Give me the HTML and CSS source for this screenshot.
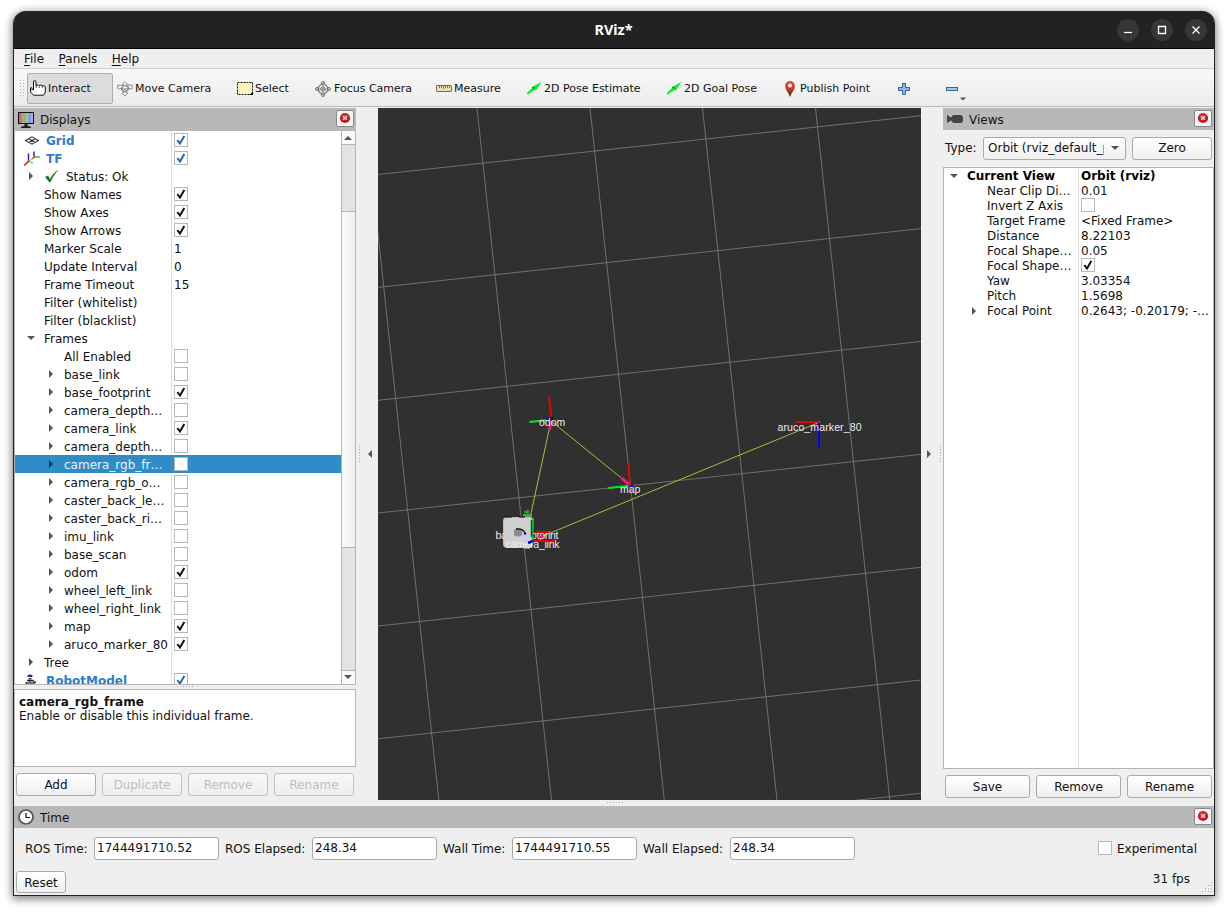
FILE: index.html
```html
<!DOCTYPE html>
<html lang="en">
<head>
<meta charset="utf-8">
<title>RViz*</title>
<link rel="stylesheet" href="styles.css">
</head>
<body>
<svg class="defs" width="0" height="0">
  <symbol id="check" viewBox="0 0 14 14"><path d="M3.3 7.2 L6 10.400 L10.300 3" fill="none" stroke="currentColor" stroke-width="2"/></symbol>
  <symbol id="right" viewBox="0 0 10 10"><path d="M3 1 L7 5 L3 9Z" fill="currentColor"/></symbol>
  <symbol id="down" viewBox="0 0 10 10"><path d="M1 3 H9 L5 7Z" fill="currentColor"/></symbol>
  <symbol id="close" viewBox="0 0 18 17"><circle cx="9" cy="8" r="5.1" fill="#c4161c"/><circle cx="9" cy="6.5" r="3.6" fill="#d94a4e" opacity=".6"/><path d="M7.200 6.200 L10.800 9.800 M10.800 6.200 L7.200 9.800" stroke="#f6dede" stroke-width="1.400"/></symbol>
  <symbol id="pose" viewBox="0 0 16 16"><path d="M.5 12.5 L6 7 L5.5 6.5 L15.5 .8 L10 9.500 L8.500 9 L2 13.500Z" fill="#00f52b"/><path d="M6 6.500 L9 8 L8 5.500Z" fill="#087a1a"/></symbol>
</svg>
<main class="window">
  <header class="titlebar">
    <h1>RViz*</h1>
    <div class="controls">
      <svg viewBox="0 0 22 22"><circle cx="11" cy="11" r="11"/><path d="M7 13.500 H15"/></svg>
      <svg viewBox="0 0 22 22"><circle cx="11" cy="11" r="11"/><path d="M7.500 7.500 H14.500 V14.500 H7.500Z"/></svg>
      <svg viewBox="0 0 22 22"><circle cx="11" cy="11" r="11"/><path d="M7.500 7.500 L14.500 14.500 M14.500 7.500 L7.500 14.500"/></svg>
    </div>
  </header>
  <nav class="menubar"><span><u>F</u>ile</span><span><u>P</u>anels</span><span><u>H</u>elp</span></nav>
  <div class="toolbar">
    <span class="grip"></span>
    <div class="tool active w-interact"><svg viewBox="0 0 16 16"><path d="M3.500 10 V2 Q3.500 .5 4.700 .5 T6 2 V5.500 L8.500 4.800 L9.200 5.500 L11.500 5 L12.200 6 L14.300 5.800 L15.300 7 V12.500 L13.500 15.200 H3.500 L.5 12 V8 Q1.500 7 2 8 V10.500" fill="#fff" stroke="#111"/><path d="M6.200 5V8 M9.200 5.500V8 M12.200 6V8" stroke="#333" stroke-width=".8"/></svg><span>Interact</span></div>
    <div class="tool w-move"><svg viewBox="0 0 16 16"><g fill="none" stroke="#777" stroke-width=".9"><path d="M8 .5 L11 3.500 H9.500 V5 L12 5 V3.500 L15.500 4.500 L15 8 L12 7.500 L10.500 8 L9.500 12 H11 L8 15 L5 12 H6.500 L5.500 8 L4 7.500 L1 8 L.5 4 L4 4.500 L6.500 5 V3.500 H5Z" stroke-dasharray="2 .4"/><path d="M4.500 6.500 L8 4.500 L11.500 6.500 V9 L8 11 L4.500 9Z M4.500 6.500L8 8.500L11.500 6.500 M8 8.500V11"/></g></svg><span>Move Camera</span></div>
    <div class="tool w-select"><svg viewBox="0 0 16 16"><path d="M.5 1.500 H15.500 V13.500 H.5Z" fill="#fcf5bb" stroke="#111" stroke-dasharray="2 1"/><path d="M12.500 14 L16 10.500V14Z" fill="#000"/></svg><span>Select</span></div>
    <div class="tool w-focus"><svg viewBox="0 0 16 16"><g fill="none" stroke="#777" stroke-width=".9"><circle cx="8" cy="8" r="4.800" stroke-width="1.300"/><circle cx="8" cy="8" r="2.300"/><path d="M8 0V16 M0 8H16 M6.500 4V1L8 0 L9.500 1V4 M6.500 12V15L8 16 L9.500 15V12 M4 6.500H1L0 8L1 9.500H4 M12 6.500H15L16 8L15 9.500H12"/></g></svg><span>Focus Camera</span></div>
    <div class="tool w-measure"><svg viewBox="0 0 16 16"><rect x=".5" y="4.500" width="15" height="6" rx=".6" fill="#e9e0ae" stroke="#6b6b66"/><path d="M3.500 5V7 M5.500 5V7 M7.500 5V8 M9.500 5V7 M11.500 5V7 M13.500 5V7" stroke="#777"/></svg><span>Measure</span></div>
    <div class="tool w-pose"><svg><use href="#pose"/></svg><span>2D Pose Estimate</span></div>
    <div class="tool w-goal"><svg><use href="#pose"/></svg><span>2D Goal Pose</span></div>
    <div class="tool w-point"><svg viewBox="0 0 16 16"><defs><linearGradient id="pin" x2="0" y2="1"><stop offset="0" stop-color="#e0523a"/><stop offset=".5" stop-color="#c64029"/><stop offset="1" stop-color="#3a2010"/></linearGradient></defs><path d="M8 0 A5 5 0 0 1 13 5 Q13 8 10.500 11 Q9 13 8 16 Q7 13 5.500 11 Q3 8 3 5 A5 5 0 0 1 8 0Z" fill="url(#pin)"/><circle cx="8" cy="4.500" r="2" fill="#f4f4f4"/></svg><span>Publish Point</span></div>
    <div class="tool w-add"><svg viewBox="0 0 16 16"><path d="M6.500 2.500H9.500V6.500H13.500V9.500H9.500V13.500H6.500V9.500H2.500V6.500H6.500Z" fill="#8fb8e4" stroke="#2f63a6"/></svg></div>
    <div class="tool minus"><svg viewBox="0 0 16 16"><rect x="2.500" y="6.500" width="11" height="3" fill="#a9c8ec" stroke="#2f63a6"/></svg><svg class="drop"><use href="#down"/></svg></div>
  </div>
  <div class="workspace">
    <section class="displays">
      <div class="dock-title"><svg viewBox="0 0 16 16"><defs><linearGradient id="screen"><stop offset="0" stop-color="#bb5757"/><stop offset=".33" stop-color="#d69b9b"/><stop offset=".34" stop-color="#69b96d"/><stop offset=".66" stop-color="#a5d6a7"/><stop offset=".67" stop-color="#8585dc"/><stop offset="1" stop-color="#b9b9f2"/></linearGradient></defs><rect x=".5" y=".5" width="15" height="11" fill="url(#screen)" stroke="#111"/><path d="M6.500 12H9.500V14H6.500Z" fill="#222"/><path d="M3 15Q8 12.500 13 15V16H3Z" fill="#222"/></svg><span>Displays</span><button class="close"><svg><use href="#close"/></svg></button></div>
      <div class="tree-wrap">
        <div class="tree">
          <div class="row item"><span class="name"><svg class="ico" viewBox="0 0 16 16"><path d="M1.500 7.500 L8 3.800 L14.500 7.500 L8 11.200Z M4.700 5.700 L11.300 9.400 M11.300 5.700 L4.700 9.400" fill="none" stroke="#333" stroke-width="1.100"/></svg>Grid</span><span class="box"><svg><use href="#check"/></svg></span></div>
          <div class="row item"><span class="name"><svg class="ico" viewBox="0 0 16 16"><path d="M4.500 2.500V10 M10 .5V5.500" stroke="#2222e8" stroke-width="1.500"/><path d="M.3 14.500L5 10" stroke="#e81515" stroke-width="1.700"/><path d="M8 8L11 5.500" stroke="#e81515" stroke-width="1.500"/><path d="M5 10.500L9 12 M11 6H16" stroke="#0de42b" stroke-width="1.300"/><path d="M5 10L9 7.500" stroke="#d9bf28"/></svg>TF</span><span class="box"><svg><use href="#check"/></svg></span></div>
          <div class="row"><span class="name l1"><svg class="arrow"><use href="#right"/></svg><svg class="ok" viewBox="0 0 14 14"><path d="M0 8 L3 6.500 L5 10 Q8 4 13.500 .5 Q8 7 5.500 13 H4Z" fill="#1d7a2a"/></svg>Status: Ok</span></div>
          <div class="row"><span class="name l1">Show Names</span><span class="box"><svg><use href="#check"/></svg></span></div>
          <div class="row"><span class="name l1">Show Axes</span><span class="box"><svg><use href="#check"/></svg></span></div>
          <div class="row"><span class="name l1">Show Arrows</span><span class="box"><svg><use href="#check"/></svg></span></div>
          <div class="row"><span class="name l1">Marker Scale</span><span class="val">1</span></div>
          <div class="row"><span class="name l1">Update Interval</span><span class="val">0</span></div>
          <div class="row"><span class="name l1">Frame Timeout</span><span class="val">15</span></div>
          <div class="row"><span class="name l1">Filter (whitelist)</span></div>
          <div class="row"><span class="name l1">Filter (blacklist)</span></div>
          <div class="row"><span class="name l1"><svg class="arrow"><use href="#down"/></svg>Frames</span></div>
          <div class="row"><span class="name l2">All Enabled</span><span class="box"></span></div>
          <div class="row"><span class="name l2"><svg class="arrow"><use href="#right"/></svg>base_link</span><span class="box"></span></div>
          <div class="row"><span class="name l2"><svg class="arrow"><use href="#right"/></svg>base_footprint</span><span class="box"><svg><use href="#check"/></svg></span></div>
          <div class="row"><span class="name l2"><svg class="arrow"><use href="#right"/></svg>camera_depth…</span><span class="box"></span></div>
          <div class="row"><span class="name l2"><svg class="arrow"><use href="#right"/></svg>camera_link</span><span class="box"><svg><use href="#check"/></svg></span></div>
          <div class="row"><span class="name l2"><svg class="arrow"><use href="#right"/></svg>camera_depth…</span><span class="box"></span></div>
          <div class="row selected"><span class="name l2"><svg class="arrow"><use href="#right"/></svg>camera_rgb_fr…</span><span class="box"></span></div>
          <div class="row"><span class="name l2"><svg class="arrow"><use href="#right"/></svg>camera_rgb_o…</span><span class="box"></span></div>
          <div class="row"><span class="name l2"><svg class="arrow"><use href="#right"/></svg>caster_back_le…</span><span class="box"></span></div>
          <div class="row"><span class="name l2"><svg class="arrow"><use href="#right"/></svg>caster_back_ri…</span><span class="box"></span></div>
          <div class="row"><span class="name l2"><svg class="arrow"><use href="#right"/></svg>imu_link</span><span class="box"></span></div>
          <div class="row"><span class="name l2"><svg class="arrow"><use href="#right"/></svg>base_scan</span><span class="box"></span></div>
          <div class="row"><span class="name l2"><svg class="arrow"><use href="#right"/></svg>odom</span><span class="box"><svg><use href="#check"/></svg></span></div>
          <div class="row"><span class="name l2"><svg class="arrow"><use href="#right"/></svg>wheel_left_link</span><span class="box"></span></div>
          <div class="row"><span class="name l2"><svg class="arrow"><use href="#right"/></svg>wheel_right_link</span><span class="box"></span></div>
          <div class="row"><span class="name l2"><svg class="arrow"><use href="#right"/></svg>map</span><span class="box"><svg><use href="#check"/></svg></span></div>
          <div class="row"><span class="name l2"><svg class="arrow"><use href="#right"/></svg>aruco_marker_80</span><span class="box"><svg><use href="#check"/></svg></span></div>
          <div class="row"><span class="name l1"><svg class="arrow"><use href="#right"/></svg>Tree</span></div>
          <div class="row item"><span class="name"><svg class="ico" viewBox="0 0 16 16"><path d="M3.500 2.500Q6 .5 8.500 2.500V4H3.500Z" fill="#222a8a"/><path d="M4.500 5H7.500V6.500H4.500Z" fill="#444"/><path d="M3 7.500H9L10 9L12 9.500 M6 7V12 M2.500 9L1.500 13 M10 9V13 M4 9V13 M8 9V13" fill="none" stroke="#222" stroke-width="1.300"/><circle cx="15" cy="12" r="1"/></svg>RobotModel</span><span class="box"><svg><use href="#check"/></svg></span></div>
        </div>
        <div class="scrollbar"><span class="sb-up"><svg><use href="#down"/></svg></span><span class="sb-track"></span><span class="sb-thumb"></span><span class="sb-rest"></span><span class="sb-down"><svg><use href="#down"/></svg></span></div>
      </div>
      <div class="splitter"><i class="dots-h"></i></div>
      <div class="help"><b>camera_rgb_frame</b><br>Enable or disable this individual frame.</div>
      <div class="buttons"><button class="btn">Add</button><button class="btn" disabled>Duplicate</button><button class="btn" disabled>Remove</button><button class="btn" disabled>Rename</button></div>
    </section>
    <div class="handle"><i class="dots-v"></i><svg class="flip"><use href="#right"/></svg></div>
    <div class="center">
      <svg class="view" viewBox="378 108 543 692">
        <g class="grid"><path d="M364.500 108L438.800 800M477 108L551.500 800M590 108L664.300 800M702.500 108L777 800M815.500 108L889.800 800M928.500 108L1002.800 800"/><path d="M378 174.500L921 115.700M378 287.400L921 228.600M378 400.300L921 341.500M378 513L921 454.300M378 626L921 567.300M378 738.800L921 680M378 851.500L921 793.300"/></g>
        <g class="links"><path d="M530 518L551 421L630 485M538 538L820 422"/></g>
        <rect x="523" y="514" width="9" height="5" fill="#7c8280"/><rect x="523" y="544" width="7" height="5" fill="#8a8a8a"/>
        <rect x="503.500" y="517.500" width="29" height="30" rx="3" fill="#cfcfcf" stroke="#bbb"/>
        <path d="M505 517H512 M519 517H525" stroke="#080808" stroke-width="1"/>
        <g fill="none" stroke-width="1.800"><path d="M549 396L551.500 419" stroke="#f00000"/><path d="M529.500 422L548 420" stroke="#00ef18"/><path d="M551 421L549.500 430" stroke="#ff138d" stroke-width="2.800"/><path d="M628.500 463L630 486" stroke="#f00000"/><path d="M608.500 488L628 486" stroke="#00ef18"/><path d="M621.500 478L626 482L629 484" stroke="#ff138d" stroke-width="3"/><path d="M795.500 422H819" stroke="#f00000" stroke-width="2"/><path d="M819 423V447" stroke="#0000f8" stroke-width="2"/><path d="M527.500 509.500V515 M524 512H529" stroke="#00b914"/></g>
        <rect x="546" y="418" width="3" height="2" fill="#0000e8"/><rect x="550" y="417" width="3" height="3" fill="#080808"/><rect x="630" y="485" width="3" height="2" fill="#0000e8"/>
        <g class="labels"><text x="539" y="426">odom</text><text x="620" y="493">map</text><text x="777.500" y="431" textLength="84">aruco_marker_80</text><text x="495.500" y="539" textLength="63">base_footprint</text><text x="505.500" y="548" textLength="54">camera_link</text></g>
        <path d="M504 520H531V541H504Z" fill="#cfcfcf"/><path d="M514 530Q518 527 522 530V535Q518 538 514 535Z" fill="#8b8b8b"/><path d="M516 529Q522 528 525 532.500" fill="none" stroke="#050505" stroke-width="1.300"/>
        <path d="M533 518L532.500 542" stroke="#00dd18" stroke-width="1.700"/><path d="M531.500 520V537" stroke="#184d2a" stroke-width="1.500"/>
        <path d="M535 532H549 M534 541H555" stroke="#f00000" stroke-width="2"/><path d="M535 538L543 534.500V538Z" fill="#ff138d"/><path d="M528 543L533 541" stroke="#0000e8" stroke-width="2.500"/><circle cx="525" cy="533.500" r="1.200" fill="#0000e8"/>
      </svg>
      <i class="dots-h"></i>
    </div>
    <div class="handle right"><svg><use href="#right"/></svg><i class="dots-v"></i></div>
    <section class="views">
      <div class="dock-title"><svg viewBox="0 0 16 16"><path d="M0 4L5 7V9L0 12Z" fill="#444"/><rect x="4.500" y="4" width="11.500" height="8" rx="3" fill="#444"/></svg><span>Views</span><button class="close"><svg><use href="#close"/></svg></button></div>
      <div class="type-row"><label>Type:</label><div class="combo"><span>Orbit (rviz_default_plugins)</span><svg><use href="#down"/></svg></div><button class="btn">Zero</button></div>
      <div class="vtree">
        <div class="vrow bold"><span class="vname l0"><svg class="arrow"><use href="#down"/></svg>Current View</span><span class="val">Orbit (rviz)</span></div>
        <div class="vrow"><span class="vname">Near Clip Di…</span><span class="val">0.01</span></div>
        <div class="vrow"><span class="vname">Invert Z Axis</span><span class="box"></span></div>
        <div class="vrow"><span class="vname">Target Frame</span><span class="val">&lt;Fixed Frame&gt;</span></div>
        <div class="vrow"><span class="vname">Distance</span><span class="val">8.22103</span></div>
        <div class="vrow"><span class="vname">Focal Shape…</span><span class="val">0.05</span></div>
        <div class="vrow"><span class="vname">Focal Shape…</span><span class="box"><svg><use href="#check"/></svg></span></div>
        <div class="vrow"><span class="vname">Yaw</span><span class="val">3.03354</span></div>
        <div class="vrow"><span class="vname">Pitch</span><span class="val">1.5698</span></div>
        <div class="vrow"><span class="vname"><svg class="arrow"><use href="#right"/></svg>Focal Point</span><span class="val">0.2643; -0.20179; -…</span></div>
      </div>
      <div class="buttons"><button class="btn">Save</button><button class="btn">Remove</button><button class="btn">Rename</button></div>
    </section>
  </div>
  <section class="time">
    <div class="dock-title"><svg viewBox="0 0 16 16"><circle cx="8" cy="8" r="7" fill="#fff" stroke="#555" stroke-width="1.700"/><path d="M8 4V8.500H12" fill="none" stroke="#111" stroke-width="1.200"/></svg><span>Time</span><button class="close"><svg><use href="#close"/></svg></button></div>
    <div class="fields"><label class="f1">ROS Time:</label><div class="input">1744491710.52</div><label class="f2">ROS Elapsed:</label><div class="input">248.34</div><label class="f3">Wall Time:</label><div class="input">1744491710.55</div><label class="f4">Wall Elapsed:</label><div class="input">248.34</div><div class="exp"><span class="box"></span>Experimental</div></div>
    <div class="status"><button class="btn">Reset</button><span class="fps">31 fps</span><svg class="size-grip" viewBox="0 0 11 11"><path d="M10 .5H11M7 3.500H8M10 3.500H11M4 6.500H5M7 6.500H8M10 6.500H11M1 9.500H2M4 9.500H5M7 9.500H8M10 9.500H11" stroke="#aaa"/></svg></div>
  </section>
</main>
</body>
</html>
```
FILE: styles.css
```css
* { box-sizing: border-box; }
body { margin: 0; width: 1228px; height: 912px; padding: 11px 13px; overflow: hidden; background: #fff; color: #111; font: 12px/18px "DejaVu Sans", sans-serif; white-space: nowrap; }
svg { display: block; flex: none; }
.defs { position: absolute; }
button { font: inherit; color: inherit; margin: 0; padding: 0; }
.window { display: flex; flex-direction: column; width: 1202px; height: 885px; border: 1px solid #242424; border-top: 0; border-radius: 13px 13px 0 0; background: #efefef; box-shadow: 0 2px 8px 1px rgba(0,0,0,.5); }
.titlebar { display: grid; grid-template-columns: 1fr auto 1fr; align-items: center; height: 38px; background: #222; border-bottom: 1px solid #000; border-radius: 12px 12px 0 0; color: #fff; }
.titlebar h1 { grid-column: 2; margin: 0 1px 0 0; font: bold 14.4px/20px "Noto Sans", sans-serif; }
.controls { display: flex; justify-content: flex-end; gap: 12px; padding-right: 7px; }
.controls svg { width: 22px; height: 22px; fill: #373737; }
.controls path { fill: none; stroke: #fff; stroke-width: 1.3; }
.menubar { display: flex; height: 20px; padding-left: 10px; gap: 14.5px; line-height: 20px; border-bottom: 1px solid #d0d0d0; }
.menubar u { text-underline-offset: 2px; }
.toolbar { display: flex; height: 38px; padding: 4px 0 2px 5px; border-bottom: 1px solid #b8b8b8; background: linear-gradient(#f8f8f8, #ececec); font-size: 11px; }
.grip { width: 5px; height: 18px; margin: 6px 3px 0 0; background: radial-gradient(circle, #b5b5b5 .6px, transparent .8px) 0 0/3px 3px; }
.tool { display: flex; align-items: center; gap: 2px; height: 31px; padding-left: 3px; }
.tool span { padding-top: 1px; }
.tool svg { width: 16px; height: 16px; }
.tool.active { background: #dcdcdc; border: 1px solid #adadad; border-radius: 2px; padding-left: 2px; }
.tool.active svg { margin-top: -1px; }
.w-interact { width: 86px; margin-right: 1px; }
.w-move { width: 120px; }
.w-select { width: 78px; }
.w-focus { width: 121px; gap: 3px; }
.w-measure { width: 90px; }
.w-pose { width: 140px; }
.w-goal { width: 116px; }
.w-point { width: 114px; }
.w-add { width: 48px; }
.tool .drop { width: 8px; height: 8px; margin: 20px 0 0 -3px; color: #555; }
.workspace { display: flex; height: 699px; padding-top: 1px; }
.displays { display: flex; flex-direction: column; width: 342px; }
.dock-title { display: flex; align-items: center; height: 22px; padding: 0 2px 0 4px; gap: 6px; background: #b8b8b8; }
.dock-title > svg { width: 16px; height: 16px; }
.dock-title > span { padding-top: 2px; }
.close { display: block; width: 18px; height: 17px; margin-left: auto; margin-top: -2px; border: 1px solid #888; border-radius: 2px; background: #f5f5f5; }
.close svg { width: 18px; height: 17px; margin: -1px; }
.displays .dock-title { height: 23px; }
.displays .dock-title > span { padding: 0; }
.tree-wrap { display: flex; height: 554px; border: 1px solid #b5b5b5; border-top: 0; background: #fff; overflow: hidden; }
.tree { width: 326px; background: linear-gradient(#ddd, #ddd) 156px 0/1px 100% no-repeat; }
.row { display: flex; align-items: center; height: 18px; }
.name { display: flex; align-items: center; width: 159px; height: 18px; padding-top: 2px; flex: none; }
.val { padding-top: 2px; }
.l1 { padding-left: 29px; }
.l2 { padding-left: 49px; }
.arrow { width: 10px; height: 10px; margin: -2px 8px 0 -18px; color: #555; }
.ok { width: 14px; height: 14px; margin: -2px 7px 0 1px; }
.ico { width: 16px; height: 16px; margin: -1px 6px 0 9px; }
.item { font-weight: bold; color: #2c7dcb; }
.box { width: 14px; height: 14px; flex: none; border: 1px solid #b8b8b8; background: #fff; }
.box svg { width: 14px; height: 14px; margin: -1px; color: #111; }
.item .box svg { color: #2468a8; }
.selected { background: #308cc6; color: #e5f4ff; }
.selected .arrow { color: #12364d; }
.scrollbar { width: 14px; border-left: 1px solid #b5b5b5; background: #e3e3e3; display: flex; flex-direction: column; }
.scrollbar svg { width: 10px; height: 10px; color: #555; }
.sb-up, .sb-down { height: 14px; background: #fafafa; padding: 2px 1px; border-bottom: 1px solid #b5b5b5; }
.sb-up svg { transform: scaleY(-1); }
.sb-track { height: 66px; }
.sb-thumb { height: 337px; border: solid #b5b5b5; border-width: 1px 0; background: linear-gradient(90deg, #fafafa, #efefef); }
.sb-rest { flex: 1; }
.sb-down { border: 0; border-top: 1px solid #b5b5b5; padding-top: 1px; }
.splitter { height: 4px; padding-top: 1px; display: flex; justify-content: center; }
.dots-h { width: 16px; height: 1px; background: repeating-linear-gradient(90deg, #aaa 0 1px, transparent 1px 3px); }
.dots-v { width: 1px; height: 16px; background: repeating-linear-gradient(#aaa 0 1px, transparent 1px 3px); }
.help { height: 78px; padding: 5px 4px; border: 1px solid #b5b5b5; background: #fff; line-height: 14px; }
.buttons { display: flex; gap: 6px; padding: 6px 2px 0; }
.buttons .btn { flex: 1; }
.btn { height: 23px; border: 1px solid #aaa; border-radius: 3px; background: linear-gradient(#fff, #efefef); }
.btn:disabled { color: #bebebe; border-color: #c3c3c3; background: linear-gradient(#f8f8f8, #eee); }
.handle { display: flex; align-items: center; width: 22px; height: 692px; padding-left: 3px; gap: 5px; color: #555; }
.handle svg { width: 10px; height: 10px; }
.flip { transform: scaleX(-1); }
.handle.right { padding-left: 3px; gap: 6px; }
.center { display: flex; flex-direction: column; width: 543px; }
.view { width: 543px; height: 692px; background: #303030; }
.center .dots-h { margin: 2px 0 0 229px; }
.grid { fill: none; stroke: #777; stroke-width: .9; }
.links { fill: none; stroke: #c5c53b; stroke-width: .9; }
.labels { font: 10.5px "Liberation Sans", sans-serif; fill: #eee; }
.views { width: 271px; }
.type-row { display: flex; align-items: center; height: 37px; padding: 0 2px; }
.type-row label { width: 38px; margin-top: -1px; }
.combo { display: flex; align-items: center; justify-content: space-between; width: 143px; height: 23px; margin-top: -1px; padding: 0 5px 0 4px; border: 1px solid #aaa; border-radius: 3px; background: linear-gradient(#fff, #f0f0f0); }
.combo span { width: 116px; overflow: hidden; }
.combo svg { width: 10px; height: 10px; color: #555; }
.type-row .btn { width: 80px; margin: -1px 0 0 6px; }
.vtree { height: 602px; border: 1px solid #b5b5b5; background: linear-gradient(#ddd, #ddd) 134px 0/1px 100% no-repeat #fff; line-height: 15px; }
.vrow { display: flex; align-items: center; height: 15px; }
.vname { display: flex; align-items: center; width: 137px; padding: 2px 0 0 43px; flex: none; }
.vname.l0 { padding-left: 23px; }
.vrow .box { margin-top: -1px; }
.bold { font-weight: bold; color: #000; }
.time { height: 89px; }
.fields { display: flex; align-items: center; height: 39px; padding: 2px 17px 0 11px; }
.fields label { flex: none; }
.f1 { width: 69px; }
.f2, .f4 { width: 93px; padding-left: 6px; }
.f3 { width: 75px; padding-left: 6px; }
.input { width: 125px; height: 23px; padding-left: 2px; border: 1px solid #aaa; border-radius: 3px; background: #fff; line-height: 21px; flex: none; }
.exp { display: flex; align-items: center; gap: 5px; margin-left: auto; }
.exp .box { margin-top: -1px; }
.status { display: flex; height: 28px; padding: 4px 2px 2px; }
.status .btn { width: 50px; height: 22px; padding-top: 1px; }
.fps { margin: -1px 0 0 auto; }
.size-grip { width: 11px; height: 11px; align-self: flex-end; margin-left: 11px; }
```
